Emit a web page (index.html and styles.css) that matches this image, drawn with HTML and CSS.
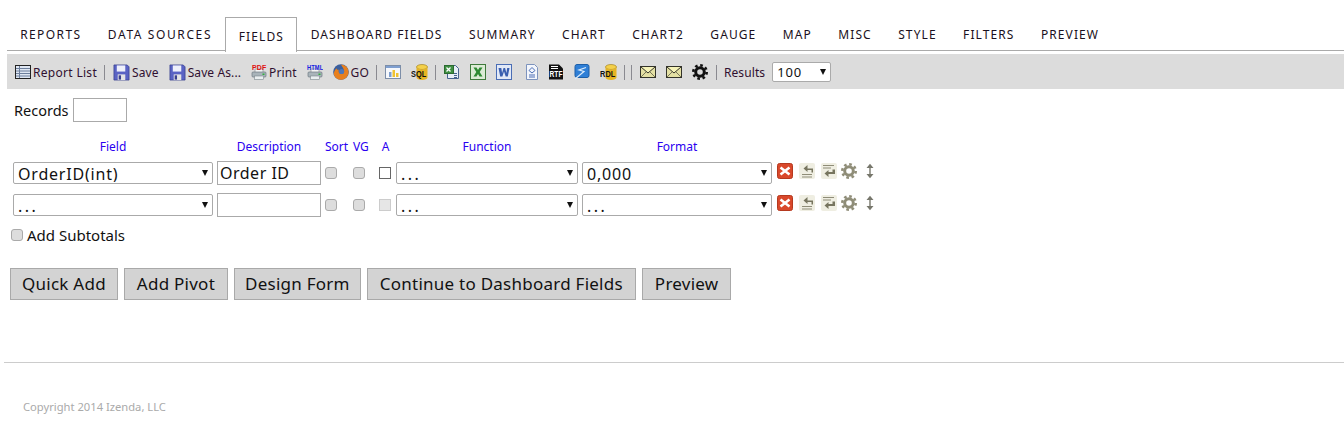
FILE: index.html
```html
<!DOCTYPE html>
<html lang="en">
<head>
  <meta charset="UTF-8" />
  <title>Report Designer | Fields</title>
  <link rel="stylesheet" href="styles.css">
</head>
<body>
  <svg class="defs" width="0" height="0">
    <symbol id="floppy" viewBox="0 0 18 18">
      <path d="M1 1h14l2 2v14H1z" fill="#5a63c4" stroke="#39408f" stroke-width=".8"/>
      <rect x="4" y="1.500" width="9" height="6.500" fill="#eef0fb"/>
      <rect x="5" y="11" width="8" height="6" fill="#e4e4e4"/>
      <rect x="6" y="12" width="2.500" height="4.500" fill="#39408f"/>
    </symbol>
    <symbol id="printer" viewBox="0 0 16 16">
      <path d="M4 5h8v4H4z" fill="#f4f4f4" stroke="#8a9298" stroke-width=".7"/>
      <rect x="1" y="8" width="14" height="5" rx="1" fill="#a9b4ba" stroke="#6d7a82" stroke-width=".7"/>
      <rect x="3.500" y="12" width="9" height="3.500" fill="#e9eef0" stroke="#7c878d" stroke-width=".6"/>
      <rect x="11.500" y="9.500" width="2" height="1.500" fill="#2fae3c"/>
    </symbol>
    <symbol id="mail" viewBox="0 0 16 16">
      <rect x=".5" y="2.500" width="15" height="11" fill="#e4e0a4" stroke="#33332a"/>
      <path d="M1 3l7 6 7-6" fill="#f6f3b8" stroke="#33332a"/>
      <path d="M1 13l5-5M15 13l-5-5" stroke="#77755a" fill="none"/>
    </symbol>
    <symbol id="gear" viewBox="0 0 16 16">
      <circle cx="8" cy="8" r="4.300" fill="none" stroke="currentColor" stroke-width="3"/>
      <circle cx="8" cy="8" r="6.700" fill="none" stroke="currentColor" stroke-width="2.600" stroke-dasharray="2.630 2.630"/>
    </symbol>
    <symbol id="remove" viewBox="0 0 16 16">
      <rect x=".5" y=".5" width="15" height="15" rx="2" fill="#d9482b" stroke="#b5391f"/>
      <path d="M3.500 4.500l9 7M12.500 4.500l-9 7" stroke="#fff" stroke-width="2.600"/>
    </symbol>
    <symbol id="move-left" viewBox="0 0 16 16">
      <rect width="16" height="16" rx="2" fill="#efeee2"/>
      <path d="M3 11.500h10M3 14h10" stroke="#8f8d78" fill="none"/>
      <path d="M8.500 2L4.500 5.500l4 3.500V7h4v2.500h1.500V5.500H8.500z" fill="#77755f"/>
    </symbol>
    <symbol id="move-right" viewBox="0 0 16 16">
      <rect width="16" height="16" rx="2" fill="#efeee2"/>
      <path d="M2 2.500h11M2 5h8" stroke="#8f8d78" fill="none"/>
      <path d="M7.500 14l-4-3.500 4-3.500v2h4V6.500H14v4.500H7.500z" fill="#77755f"/>
    </symbol>
    <symbol id="resize" viewBox="0 0 16 16">
      <path d="M8 2v12" stroke="#77776c" stroke-width="1.400"/>
      <path d="M4.500 5L8 .8 11.500 5zM4.500 11L8 15.200 11.500 11z" fill="#77776c"/>
    </symbol>
  </svg>

  <nav class="tabs">
    <a class="tab reports">REPORTS</a>
    <a class="tab sources">DATA SOURCES</a>
    <a class="tab active">FIELDS</a>
    <a class="tab">DASHBOARD FIELDS</a>
    <a class="tab">SUMMARY</a>
    <a class="tab">CHART</a>
    <a class="tab">CHART2</a>
    <a class="tab">GAUGE</a>
    <a class="tab">MAP</a>
    <a class="tab">MISC</a>
    <a class="tab">STYLE</a>
    <a class="tab">FILTERS</a>
    <a class="tab">PREVIEW</a>
  </nav>

  <div class="toolbar">
    <a class="tool list">
      <svg class="ico" viewBox="0 0 16 16">
        <rect x=".5" y="1.500" width="15" height="13" fill="#dfe7f3" stroke="#222"/>
        <path d="M1 4.500h14M1 7h14M1 9.500h14M1 12h14M4.500 2v12" stroke="#6d7f9c" fill="none"/>
      </svg>Report List
    </a>
    <span class="sep"></span>
    <a class="tool"><svg class="ico wide"><use href="#floppy"/></svg>Save</a>
    <a class="tool"><svg class="ico wide"><use href="#floppy"/></svg>Save As...</a>
    <a class="tool">
      <svg class="ico" viewBox="0 0 16 16">
        <use href="#printer"/>
        <text class="badge red" x="1" y="6">PDF</text>
      </svg>Print
    </a>
    <a class="tool">
      <svg class="ico" viewBox="0 0 16 16">
        <use href="#printer"/>
        <text class="badge blue" transform="translate(0 6) scale(.88 1)">HTML</text>
      </svg>
    </a>
    <a class="tool">
      <svg class="ico" viewBox="0 0 16 16">
        <circle cx="8" cy="8" r="7.800" fill="#3a5f9e"/>
        <path d="M8 .5A7.500 7.500 0 0 1 15.500 9c-.6 4-4 6.800-7.500 6.800-3.300 0-6-2-7-4.800C.4 9 1.500 6 3.500 4.200 3.800 6 5 6 6 5.500 5 7 6 10 8.500 10c2 0 3-1.500 2.500-3.500C10.500 4 9 2.500 8 .5z" fill="#e8801e"/>
        <circle cx="8.500" cy="7.500" r="2.600" fill="#4f78ba"/>
      </svg>GO
    </a>
    <span class="sep"></span>
    <a class="tool">
      <svg class="ico" viewBox="0 0 16 16">
        <rect x=".5" y="1.500" width="15" height="13" fill="#f6f8fc" stroke="#7d8ea8"/>
        <rect x="1" y="2" width="14" height="2" fill="#7f9fd0"/>
        <rect x="4" y="8" width="2.500" height="5" fill="#7f9fd0"/>
        <rect x="7.500" y="6" width="2.500" height="7" fill="#f0c332"/>
        <rect x="11" y="9" width="2.500" height="4" fill="#f0c332"/>
      </svg>
    </a>
    <a class="tool">
      <svg class="ico can" viewBox="0 0 17 16">
        <ellipse cx="11" cy="3" rx="5.500" ry="2.500" fill="#f4d04a" stroke="#9c7a12" stroke-width=".6"/>
        <path d="M5.500 3v10.500c0 1.400 2.500 2.500 5.500 2.500s5.500-1.100 5.500-2.500V3c0 1.400-2.500 2.500-5.500 2.500S5.500 4.400 5.500 3z" fill="#e6b422"/>
        <text class="stamp" transform="translate(0 12.500) scale(.78 1)">SQL</text>
      </svg>
    </a>
    <span class="sep"></span>
    <a class="tool">
      <svg class="ico" viewBox="0 0 16 16">
        <path d="M3.500 1.500h8l3 3v10h-11z" fill="#e8eef8" stroke="#46628f"/>
        <rect x="0.500" y="1.500" width="9" height="8" fill="#3f8f43" stroke="#2c6a30"/>
        <path d="M2.500 3.500l4 4M6.500 3.500l-4 4" stroke="#fff" stroke-width="1.300"/>
        <path d="M10 9.500h3M10 11.500h3M10 13.500h3" stroke="#46628f" fill="none"/>
      </svg>
    </a>
    <a class="tool">
      <svg class="ico" viewBox="0 0 16 16">
        <rect x=".5" y=".5" width="15" height="15" fill="#dcebd6" stroke="#3f7a3c"/>
        <path d="M3.500 3.500h3L8 6l1.500-2.500h3L9.700 8l2.800 4.500h-3L8 10l-1.500 2.500h-3L6.300 8z" fill="#2f8a33"/>
      </svg>
    </a>
    <a class="tool">
      <svg class="ico" viewBox="0 0 16 16">
        <rect x=".5" y=".5" width="15" height="15" fill="#e2e9f7" stroke="#4a6db5"/>
        <path d="M2.500 4h2.800l.8 5 1.400-5h1.600l1.300 5 .8-5h2.300L11.800 12.500H9.700L8 7.500l-1.600 5H4.200z" fill="#3a5fb0"/>
      </svg>
    </a>
    <a class="tool doc">
      <svg class="ico" viewBox="0 0 16 16">
        <path d="M2.500 .5h8l3 3v12h-11z" fill="#f3f6fc" stroke="#7d93bd"/>
        <path d="M5 11h6M5 13h6" stroke="#4a6db5" fill="none"/>
        <path d="M8 3.500l3 3-3 2.500-3-2.500z" fill="none" stroke="#4a6db5"/>
      </svg>
    </a>
    <a class="tool">
      <svg class="ico" viewBox="0 0 16 16">
        <path d="M1 .5h10l4 4v11H1z" fill="#111"/>
        <path d="M3 2.500h7M3 4.500h7" stroke="#fff" fill="none"/>
        <text class="stamp light" transform="translate(1.500 13) scale(.78 1)">RTF</text>
      </svg>
    </a>
    <a class="tool">
      <svg class="ico" viewBox="0 0 16 16">
        <rect x="1" y=".5" width="14" height="13" rx="2" fill="#2f7fd6" stroke="#1d5fa8"/>
        <path d="M12 3.500L5 6l5 1.500L1 15" fill="none" stroke="#dcecfb" stroke-width="1.200"/>
      </svg>
    </a>
    <a class="tool">
      <svg class="ico can" viewBox="0 0 17 16">
        <ellipse cx="11" cy="3" rx="5.500" ry="2.500" fill="#f4d04a" stroke="#9c7a12" stroke-width=".6"/>
        <path d="M5.500 3v10.500c0 1.400 2.500 2.500 5.500 2.500s5.500-1.100 5.500-2.500V3c0 1.400-2.500 2.500-5.500 2.500S5.500 4.400 5.500 3z" fill="#e6b422"/>
        <text class="stamp" transform="translate(0 12.500) scale(.78 1)">RDL</text>
      </svg>
    </a>
    <span class="sep"></span>
    <span class="sep pair"></span>
    <a class="tool"><svg class="ico"><use href="#mail"/></svg></a>
    <a class="tool"><svg class="ico"><use href="#mail"/></svg></a>
    <a class="tool gear-btn"><svg class="ico dark"><use href="#gear"/></svg></a>
    <span class="sep"></span>
    <span class="results-label">Results</span>
    <div class="pick results">
      <select><option>100</option></select>
    </div>
  </div>

  <main class="content">
    <div class="records">
      <label>Records</label>
      <input type="text" class="records-input">
    </div>

    <div class="grid">
      <div class="head">Field</div>
      <div class="head">Description</div>
      <div class="head left">Sort</div>
      <div class="head left">VG</div>
      <div class="head">A</div>
      <div class="head">Function</div>
      <div class="head">Format</div>
      <div></div>

      <div class="pick"><select><option>OrderID(int)</option></select></div>
      <input type="text" class="desc" value="Order ID">
      <input type="checkbox" class="check">
      <input type="checkbox" class="check">
      <input type="checkbox" class="check square">
      <div class="pick"><select class="dots"><option>...</option></select></div>
      <div class="pick"><select><option>0,000</option></select></div>
      <div class="row-tools">
        <svg class="ico"><use href="#remove"/></svg>
        <svg class="ico"><use href="#move-left"/></svg>
        <svg class="ico"><use href="#move-right"/></svg>
        <svg class="ico muted gear-tool"><use href="#gear"/></svg>
        <svg class="ico resize-tool"><use href="#resize"/></svg>
      </div>

      <div class="pick"><select class="dots"><option>...</option></select></div>
      <input type="text" class="desc">
      <input type="checkbox" class="check">
      <input type="checkbox" class="check">
      <input type="checkbox" class="check square" disabled>
      <div class="pick"><select class="dots"><option>...</option></select></div>
      <div class="pick"><select class="dots"><option>...</option></select></div>
      <div class="row-tools">
        <svg class="ico"><use href="#remove"/></svg>
        <svg class="ico"><use href="#move-left"/></svg>
        <svg class="ico"><use href="#move-right"/></svg>
        <svg class="ico muted gear-tool"><use href="#gear"/></svg>
        <svg class="ico resize-tool"><use href="#resize"/></svg>
      </div>
    </div>

    <label class="subtotals"><input type="checkbox" class="check">Add Subtotals</label>

    <div class="actions">
      <button class="quick">Quick Add</button>
      <button>Add Pivot</button>
      <button class="design">Design Form</button>
      <button>Continue to Dashboard Fields</button>
      <button>Preview</button>
    </div>
  </main>

  <hr class="rule">

  <footer class="copyright">Copyright 2014 Izenda, LLC</footer>
</body>
</html>
```

FILE: styles.css
```css
* {
  box-sizing: border-box;
}

html, body {
  height: 434px;
  overflow: hidden;
}

body {
  margin: 0;
  background: #fff;
  color: #111;
  font-family: "Noto Sans", sans-serif;
}

.defs {
  display: block;
  height: 0;
}

.tabs {
  display: flex;
  margin: 17px 0 0 7px;
  height: 34px;
  border-bottom: 1px solid #aaa;
}

.tab {
  padding: 9px 13.200px 0;
  font-size: 12px;
  letter-spacing: 1.100px;
  color: #1a1020;
}

.tab.reports {
  letter-spacing: 1.400px;
}

.tab.sources {
  letter-spacing: 1.600px;
}

.tab.active {
  height: 35px;
  padding: 10px 12.500px 0;
  background: #fff;
  border: 1px solid #aaa;
  border-bottom: none;
}

.toolbar {
  display: flex;
  align-items: center;
  height: 35px;
  margin: 3px 0 0 7px;
  padding: 1px 0 0 8px;
  background: #dcdcdc;
  font-size: 12px;
  letter-spacing: .1px;
  color: #301030;
}

.tool {
  display: flex;
  align-items: center;
  gap: 2px;
  margin-right: 10px;
}

.tool.list {
  letter-spacing: .3px;
}

.tool.doc {
  margin-left: 2px;
  margin-right: 8px;
}

.tool.gear-btn {
  margin-right: 11px;
}

.ico {
  flex: none;
  width: 16px;
  height: 16px;
}

.ico.wide {
  width: 17px;
  height: 17px;
}

.ico.can {
  width: 17px;
}

.ico.dark {
  color: #111;
}

.ico.muted {
  color: #8f8d78;
}

.gear-tool {
  margin-left: -2px;
}

.resize-tool {
  margin-left: -1px;
}

.badge {
  font: bold 7px "Liberation Sans", sans-serif;
}

.badge.red {
  fill: #e01010;
}

.badge.blue {
  fill: #1420e0;
  font-size: 6.500px;
}

.stamp {
  font: bold 9.500px "Liberation Sans", sans-serif;
  fill: #111;
}

.stamp.light {
  fill: #fff;
  font-size: 8.500px;
}

.sep {
  width: 1px;
  height: 15px;
  margin: 0 8px 0 -3px;
  background: #8a8a90;
}

.sep.pair {
  margin-left: -2px;
}

.results-label {
  margin-right: 7px;
  margin-left: -1px;
}

.pick {
  position: relative;
}

.pick select {
  display: block;
  width: 100%;
  height: 22px;
  padding: 0 16px 1px 4px;
  appearance: none;
  background: #fff;
  border: 1px solid #aaa;
  border-radius: 2px;
  color: #111;
  font: 16px "Noto Sans", sans-serif;
  letter-spacing: .8px;
}

.pick select.dots {
  letter-spacing: 2.500px;
}

.pick::after {
  content: "";
  position: absolute;
  right: 5px;
  top: 8px;
  border-left: 3.500px solid transparent;
  border-right: 3.500px solid transparent;
  border-top: 6px solid #111;
}

.pick.results {
  width: 59px;
  margin-top: -1px;
}

.pick.results select {
  height: 20px;
  padding-bottom: 0;
  font-size: 13px;
}

.pick.results::after {
  top: 7px;
}

.content {
  padding-left: 10px;
}

.records {
  display: flex;
  align-items: center;
  gap: 4px;
  margin: 9px 0 0 4px;
  font-size: 14.500px;
}

.records-input {
  width: 54px;
  height: 24px;
  border: 1px solid #aaa;
}

.grid {
  display: grid;
  grid-template-columns: 200px 104px 24px 22px 13px 182px 190px 110px;
  column-gap: 4px;
  align-items: center;
  margin: 15px 0 0 3px;
}

.head {
  height: 24px;
  padding-top: 1px;
  text-align: center;
  font-size: 12px;
  color: #2a00f0;
}

.head.left {
  text-align: left;
  white-space: nowrap;
}

.desc {
  width: 100%;
  height: 24px;
  padding: 0 2px;
  border: 1px solid #aaa;
  color: #111;
  font: 16px "Noto Sans", sans-serif;
  letter-spacing: .5px;
}

.check {
  width: 12px;
  height: 12px;
  margin: 0;
  appearance: none;
  background: #ddd;
  border: 1px solid #aaa;
  border-radius: 3px;
}

.check.square {
  background: #fff;
  border-color: #666;
  border-radius: 0;
}

.check.square:disabled {
  background: #e6e6e6;
  border-color: #ccc;
}

.grid .pick, .grid .desc, .grid .check, .row-tools {
  margin-bottom: 8px;
}

.row-tools {
  display: flex;
  gap: 6px;
  padding-left: 1px;
  margin-top: -5px;
}

.subtotals {
  display: flex;
  align-items: center;
  gap: 4px;
  margin: 0 0 0 1px;
  font-size: 15px;
}

.actions {
  display: flex;
  gap: 6px;
  margin-top: 23px;
}

.actions button {
  height: 32px;
  padding: 0 12px 2px;
  background: #d3d3d3;
  border: 1px solid #a9a9a9;
  color: #111;
  font: 17px "Noto Sans", sans-serif;
  letter-spacing: .25px;
}

.actions button.quick {
  padding: 0 11px 2px;
}

.actions button.design {
  padding: 0 10px 2px;
}

.rule {
  height: 1px;
  margin: 62px 0 0 4px;
  background: #ccc;
  border: none;
}

.copyright {
  margin: 36px 0 0 23px;
  font-size: 11.200px;
  color: #aaa;
}
```
